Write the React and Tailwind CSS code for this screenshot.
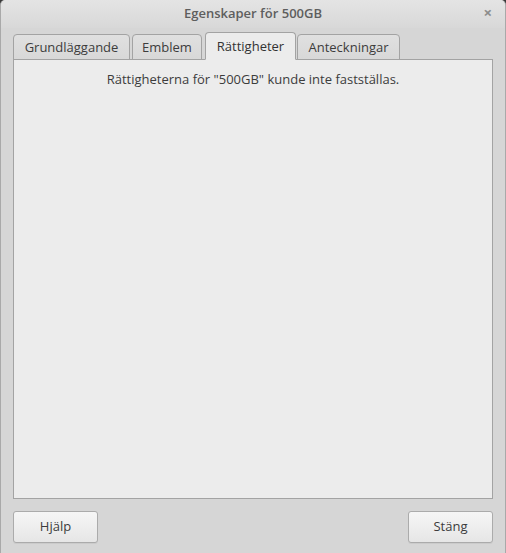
export default function App() {
  const tabs = [
    { label: "Grundläggande", w: "w-[117px]" },
    { label: "Emblem", w: "w-[70px]" },
    { label: "Rättigheter", w: "w-[91px]", active: true },
    { label: "Anteckningar", w: "w-[103px]" }
  ];

  return (
    <div className="h-[553px] w-[506px] bg-[#3a3a3a] font-['Open_Sans',sans-serif] text-[13px] text-[#3c3c3c]">
      <div className="flex h-full flex-col rounded-t-[5px] border-x border-[#a9a9a9] bg-[#d6d6d6]">
        <header className="relative flex h-[28px] shrink-0 items-center justify-center rounded-t-[5px] bg-gradient-to-b from-[#e4e4e4] to-[#d8d8d8]">
          <span className="text-[13px] font-semibold text-[#5e5e5e]">Egenskaper för 500GB</span>
          <span className="absolute right-[13px] top-[5px] text-[15px] font-bold leading-none text-[#8c8c8c]">×</span>
        </header>

        <div className="flex min-h-0 flex-1 flex-col px-[12px] pt-[4px]">
          <div className="relative z-10 -mb-px flex items-end">
            {tabs.map((tab, i) => (
              <div
                key={tab.label}
                className={[
                  "flex items-center justify-center rounded-t-[4px] border border-[#a3a3a3] leading-none",
                  tab.w,
                  i === 1 ? "ml-[2px]" : i === 2 ? "ml-[3px]" : i === 3 ? "ml-[1px]" : "",
                  tab.active
                    ? "h-[28px] border-b-[#ececec] bg-[#ececec] text-[#333]"
                    : "h-[26px] bg-gradient-to-b from-[#e0e0e0] to-[#d8d8d8] text-[#3c3c3c]"
                ].join(" ")}
              >
                {tab.label}
              </div>
            ))}
          </div>
          <section className="h-[440px] shrink-0 border border-[#a3a3a3] bg-[#ececec] pt-[10px] text-center">
            Rättigheterna för "500GB" kunde inte fastställas.
          </section>

          <div className="mt-[12px] flex justify-between">
            <button className="h-[32px] w-[85px] rounded-[3px] border border-[#ababab] bg-gradient-to-b from-[#f6f6f6] to-[#e6e6e6] text-[13px] text-[#3c3c3c] shadow-[0_1px_0_rgba(0,0,0,0.05)]">
              Hjälp
            </button>
            <button className="h-[32px] w-[85px] rounded-[3px] border border-[#ababab] bg-gradient-to-b from-[#f6f6f6] to-[#e6e6e6] text-[13px] text-[#3c3c3c] shadow-[0_1px_0_rgba(0,0,0,0.05)]">
              Stäng
            </button>
          </div>
        </div>
      </div>
    </div>
  );
}
